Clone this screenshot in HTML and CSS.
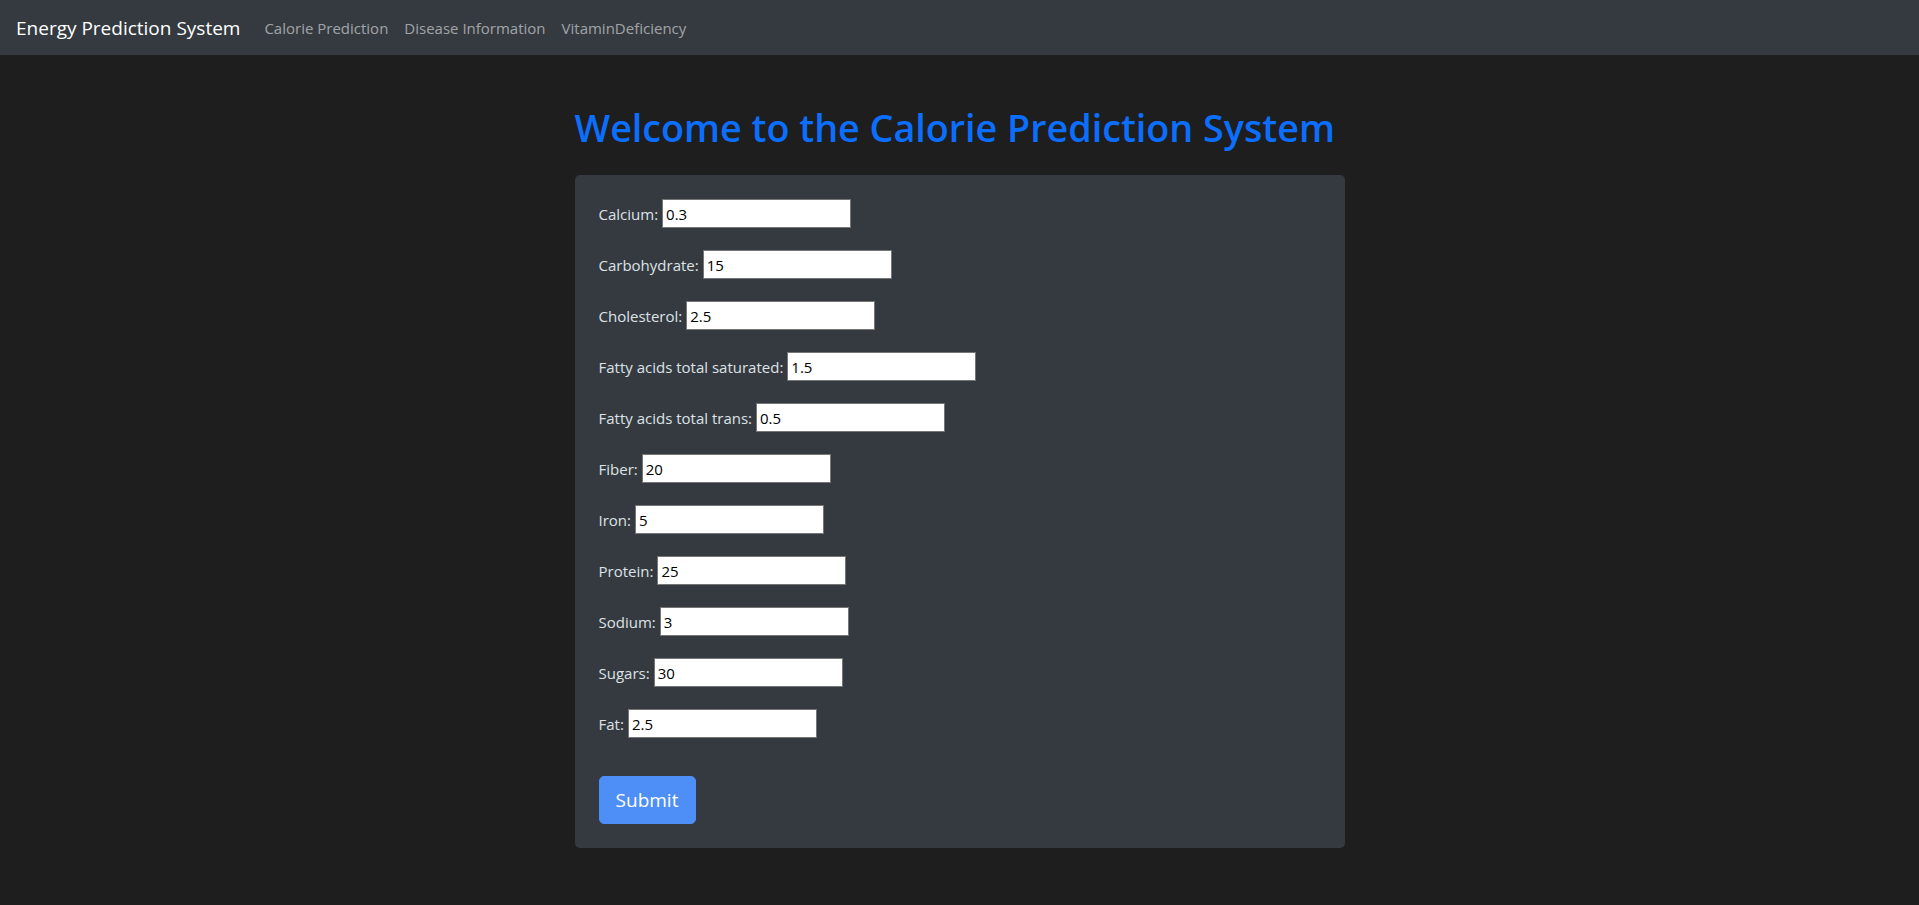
FILE: index.html
```html
<!DOCTYPE html>
<html lang="en">
<head>
<meta charset="utf-8">
<title>Calorie Prediction</title>
<link rel="stylesheet" href="styles.css">
</head>
<body>
<nav class="navbar">
  <a class="brand" href="#">Energy Prediction System</a>
  <ul class="nav-links">
    <li><a href="#">Calorie Prediction</a></li>
    <li><a href="#">Disease Information</a></li>
    <li><a href="#">VitaminDeficiency</a></li>
  </ul>
</nav>
<main class="container">
  <h1 class="title">Welcome to the Calorie Prediction System</h1>
  <form class="card">
    <div class="row"><label>Calcium:</label><input type="text" value="0.3"></div>
    <div class="row"><label>Carbohydrate:</label><input type="text" value="15"></div>
    <div class="row"><label>Cholesterol:</label><input type="text" value="2.5"></div>
    <div class="row"><label>Fatty acids total saturated:</label><input type="text" value="1.5"></div>
    <div class="row"><label>Fatty acids total trans:</label><input type="text" value="0.5"></div>
    <div class="row"><label>Fiber:</label><input type="text" value="20"></div>
    <div class="row"><label>Iron:</label><input type="text" value="5"></div>
    <div class="row"><label>Protein:</label><input type="text" value="25"></div>
    <div class="row"><label>Sodium:</label><input type="text" value="3"></div>
    <div class="row"><label>Sugars:</label><input type="text" value="30"></div>
    <div class="row"><label>Fat:</label><input type="text" value="2.5"></div>
    <button type="button" class="btn">Submit</button>
  </form>
</main>
</body>
</html>
```
FILE: styles.css
```css
* { box-sizing: border-box; }
html, body { margin: 0; padding: 0; }
body {
  background: #1e1e1e;
  font-family: "Open Sans", "Noto Sans", sans-serif;
  color: #dee2e6;
}
.navbar {
  height: 55px;
  background: #343a40;
  display: flex;
  align-items: center;
  padding: 0 16px 0 16px;
}
.brand {
  color: #ffffff;
  font-size: 19px;
  text-decoration: none;
  margin-right: 16px;
}
.nav-links {
  list-style: none;
  margin: 0;
  padding: 0;
  display: flex;
}
.nav-links a {
  display: block;
  padding: 0 8px;
  font-size: 15px;
  color: rgba(255, 255, 255, 0.55);
  text-decoration: none;
}
.container {
  width: 770px;
  margin: 0 auto;
}
.title {
  margin: 49px 0 23px;
  font-size: 37.7px;
  font-weight: 600;
  line-height: 48px;
  color: #0b6efd;
  text-align: left;
  white-space: nowrap;
}
.card {
  background: #343a40;
  border-radius: 5px;
  padding: 24px;
  display: flex;
  flex-direction: column;
  align-items: flex-start;
}
.row {
  display: flex;
  align-items: center;
  gap: 4px;
  height: 29px;
  margin-bottom: 22px;
}
.row label {
  font-size: 15px;
  color: #dee2e6;
}
.row input {
  width: 189px;
  height: 29px;
  border: 1px solid #767676;
  padding: 1px 3px;
  font-family: "Open Sans", sans-serif;
  font-size: 15px;
  color: #000;
  background: #fff;
  border-radius: 0;
  outline: none;
}
.btn {
  margin-top: 16px;
  width: 97px;
  height: 48px;
  border: 1px solid #4e8ef7;
  background: #4e8ef7;
  color: #ffffff;
  font-family: "Open Sans", sans-serif;
  font-size: 19px;
  border-radius: 5px;
  padding: 0;
}
```
